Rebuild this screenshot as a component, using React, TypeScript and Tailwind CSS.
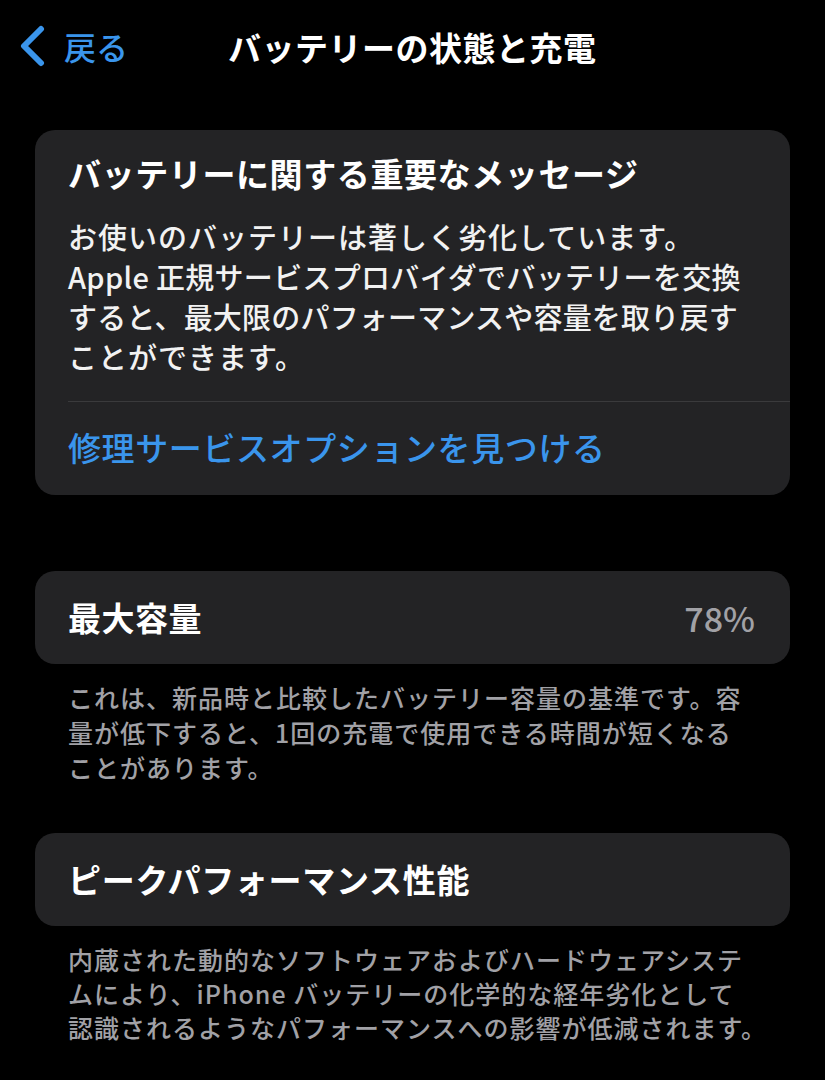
const font = { fontFamily: '"Noto Sans CJK JP", "Noto Sans", sans-serif' }

function Chevron() {
  return (
    <svg width="28" height="42" viewBox="0 0 28 42" fill="none">
      <path
        d="M23 4 L6 21 L23 38"
        stroke="#3a95ec"
        strokeWidth="6"
        strokeLinecap="round"
        strokeLinejoin="round"
      />
    </svg>
  )
}

export default function App() {
  return (
    <div className="min-h-[1080px] w-[825px] bg-black text-white overflow-hidden" style={font}>
      {/* Nav bar */}
      <div className="relative flex items-center h-[94px] px-[18px] pb-[2px]">
        <div className="flex items-center gap-[18px]">
          <Chevron />
          <span className="text-[32px] leading-none text-[#3a95ec] font-medium">戻る</span>
        </div>
        <div className="absolute left-[228px] top-[26px] text-[33px] leading-[42px] font-bold tracking-[0.5px]">
          バッテリーの状態と充電
        </div>
      </div>

      <div className="px-[35px] pt-[36px]">
        {/* Important message card */}
        <div className="bg-[#232325] rounded-[20px] overflow-hidden">
          <div className="px-[33px] pt-[20px] pb-[25px]">
            <div className="text-[33px] leading-[46px] font-bold tracking-[0.6px] whitespace-nowrap">
              バッテリーに関する重要なメッセージ
            </div>
            <div className="mt-[20px] text-[29px] leading-[40px] font-medium text-[#f2f2f2] whitespace-nowrap">
              <div className="tracking-[1px]">お使いのバッテリーは著しく劣化しています。</div>
              <div className="tracking-[0.3px]">Apple 正規サービスプロバイダでバッテリーを交換</div>
              <div className="tracking-[0.2px]">すると、最大限のパフォーマンスや容量を取り戻す</div>
              <div className="tracking-[1px]">ことができます。</div>
            </div>
          </div>
          <div className="ml-[33px] h-px bg-[#3a3a3c]" />
          <div className="px-[33px] h-[93px] flex items-center pb-[2px]">
            <span className="text-[33px] leading-none font-medium text-[#3a95ec] tracking-[0.6px] whitespace-nowrap">
              修理サービスオプションを見つける
            </span>
          </div>
        </div>

        {/* Max capacity */}
        <div className="mt-[76px] bg-[#232325] rounded-[20px] h-[93px] px-[33px] flex items-center justify-between">
          <span className="text-[33px] leading-none font-bold tracking-[0.5px]">最大容量</span>
          <span className="text-[34px] leading-none font-medium text-[#a1a1a6] pr-[2px]">78%</span>
        </div>
        <div className="px-[33px] pt-[16px] text-[25px] leading-[35px] text-[#a1a1a6] font-medium tracking-[1px] whitespace-nowrap">
          <div>これは、新品時と比較したバッテリー容量の基準です。容</div>
          <div>量が低下すると、1回の充電で使用できる時間が短くなる</div>
          <div>ことがあります。</div>
        </div>

        {/* Peak performance */}
        <div className="mt-[48px] bg-[#232325] rounded-[20px] h-[93px] px-[33px] flex items-center">
          <span className="text-[33px] leading-none font-bold tracking-[0.7px]">ピークパフォーマンス性能</span>
        </div>
        <div className="px-[33px] pt-[16px] text-[25px] leading-[34px] text-[#a1a1a6] font-medium tracking-[1px] whitespace-nowrap">
          <div>内蔵された動的なソフトウェアおよびハードウェアシステ</div>
          <div>ムにより、iPhone バッテリーの化学的な経年劣化として</div>
          <div>認識されるようなパフォーマンスへの影響が低減されます。</div>
        </div>
      </div>
    </div>
  )
}
